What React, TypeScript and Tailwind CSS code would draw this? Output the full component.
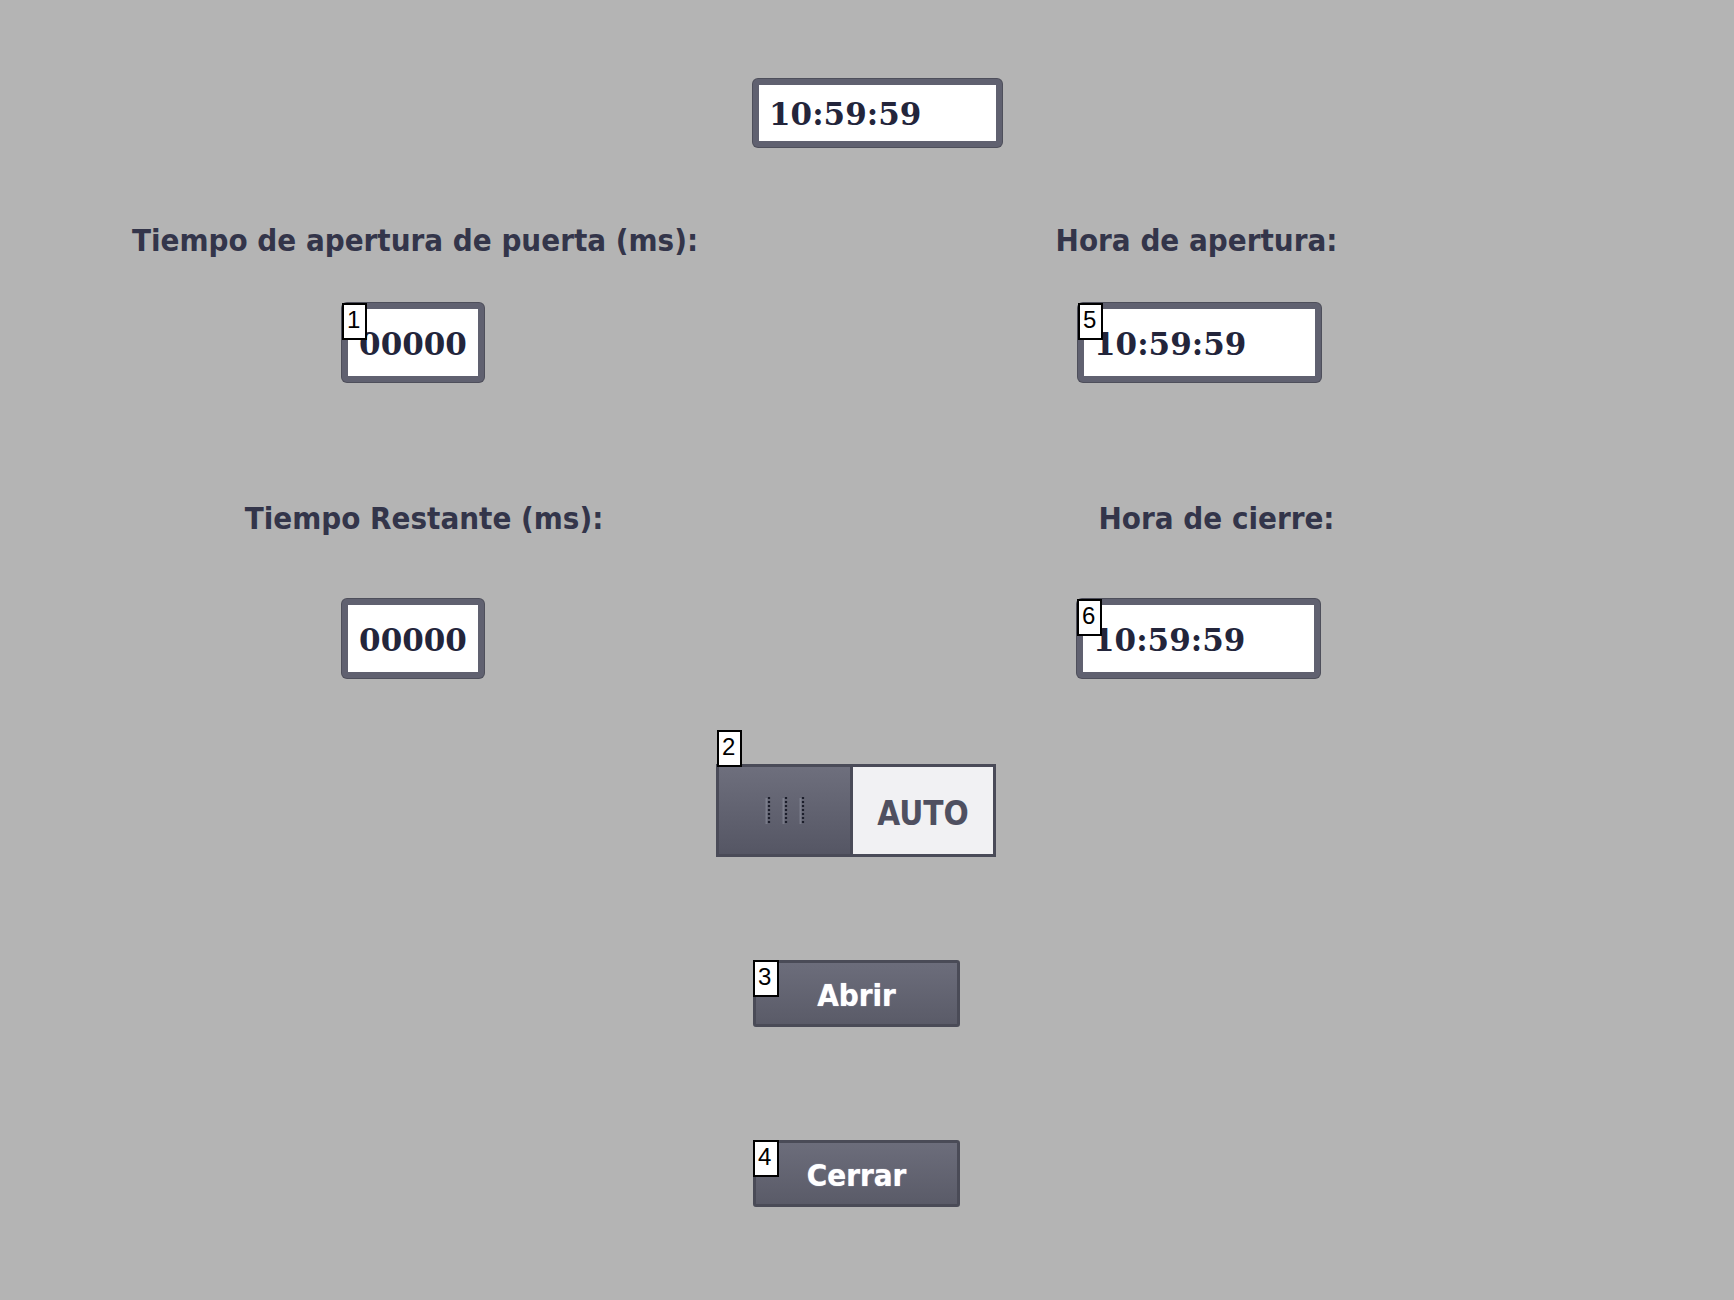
import React from "react";

const labelFont = { fontFamily: '"DejaVu Sans Condensed", "DejaVu Sans", sans-serif' };
const valueFont = { fontFamily: '"DejaVu Serif", "Liberation Serif", serif' };
const badgeFont = { fontFamily: '"Liberation Sans", Arial, sans-serif' };

function Badge({ n, className = "" }: { n: string; className?: string }) {
  return (
    <div
      className={`absolute w-[25px] h-[37px] bg-white border-2 border-black text-black text-[24px] leading-[30px] pl-[3px] ${className}`}
      style={badgeFont}
    >
      {n}
    </div>
  );
}

function ValueBox({
  w,
  value,
  badge,
  align = "center",
  h = 79,
}: {
  w: string;
  value: string;
  badge?: string;
  align?: "center" | "left";
  h?: number;
}) {
  return (
    <div className={`relative ${w} shrink-0`}>
      <div
        className={`${h === 79 ? "h-[79px]" : "h-[68px]"} w-full rounded-[5px] border-[6px] border-[#606170] bg-white shadow-[0_0_0_1px_#4e4f5b] flex items-center pt-[3px] ${
          align === "center" ? "justify-center" : "justify-start pl-[10px]"
        }`}
      >
        <span className="text-[31px] font-bold text-[#23253b] leading-none" style={valueFont}>
          {value}
        </span>
      </div>
      {badge && <Badge n={badge} className="left-0 top-0" />}
    </div>
  );
}

function Grip() {
  return (
    <svg width="40" height="32" viewBox="0 0 40 32">
      {[4, 21, 38].map((x) => (
        <g key={x}>
          <line x1={x - 2.5} y1="3" x2={x - 2.5} y2="29" stroke="#9a9ba8" strokeOpacity="0.45" strokeWidth="2" />
          <line x1={x} y1="2" x2={x} y2="30" stroke="#1c1e2b" strokeWidth="2.2" strokeDasharray="2 2" />
        </g>
      ))}
    </svg>
  );
}

function Button({ label, badge }: { label: string; badge: string }) {
  return (
    <div className="relative ml-[753px] w-[207px]">
      <div className="h-[67px] w-full rounded-[3px] border-[3px] border-[#4a4b57] bg-gradient-to-b from-[#6c6d7b] to-[#5a5b68] flex items-center justify-center pt-[4px]">
        <span
          className="text-white font-bold text-[31px] leading-none [text-shadow:0_0_1px_#d8dcf0]"
          style={labelFont}
        >
          {label}
        </span>
      </div>
      <Badge n={badge} className="left-0 top-0 w-[26px]" />
    </div>
  );
}

export default function App() {
  return (
    <div className="min-h-[1300px] w-[1734px] bg-[#b4b4b4] pt-[79px] overflow-hidden">
      {/* Clock */}
      <div className="ml-[753px]">
        <ValueBox w="w-[249px]" value="10:59:59" align="left" h={68} />
      </div>

      {/* Labels row 1 */}
      <div
        className="mt-[78px] flex h-[31px] items-center text-[31px] font-bold leading-[31px] text-[#33354a]"
        style={labelFont}
      >
        <div className="w-[830px] shrink-0 text-center whitespace-nowrap">Tiempo de apertura de puerta (ms):</div>
        <div className="w-[733px] shrink-0 text-center whitespace-nowrap">Hora de apertura:</div>
      </div>

      {/* Boxes row 1 */}
      <div className="mt-[47px] flex">
        <div className="ml-[342px]">
          <ValueBox w="w-[142px]" value="00000" badge="1" />
        </div>
        <div className="ml-[594px]">
          <ValueBox w="w-[243px]" value="10:59:59" badge="5" align="left" />
        </div>
      </div>

      {/* Labels row 2 */}
      <div
        className="mt-[121px] flex h-[31px] items-center text-[31px] font-bold leading-[31px] text-[#33354a]"
        style={labelFont}
      >
        <div className="w-[848px] shrink-0 text-center whitespace-nowrap">Tiempo Restante (ms):</div>
        <div className="w-[737px] shrink-0 text-center whitespace-nowrap">Hora de cierre:</div>
      </div>

      {/* Boxes row 2 */}
      <div className="mt-[65px] flex">
        <div className="ml-[342px]">
          <ValueBox w="w-[142px]" value="00000" />
        </div>
        <div className="ml-[593px]">
          <ValueBox w="w-[243px]" value="10:59:59" badge="6" align="left" />
        </div>
      </div>

      {/* Toggle */}
      <div className="relative mt-[86px] ml-[716px] w-[280px]">
        <div className="flex h-[93px] w-full border-[3px] border-[#4a4b58] bg-[#4a4b58]">
          <div className="flex w-[131px] items-center justify-center bg-gradient-to-b from-[#6e6f7d] to-[#555664]">
            <Grip />
          </div>
          <div className="ml-[3px] flex flex-1 items-center justify-center bg-[#f1f1f3] pt-[5px]">
            <span className="text-[33px] font-bold leading-none text-[#4f5060]" style={labelFont}>
              AUTO
            </span>
          </div>
        </div>
        <Badge n="2" className="left-[1px] top-[-34px]" />
      </div>

      {/* Buttons */}
      <div className="mt-[103px]">
        <Button label="Abrir" badge="3" />
      </div>
      <div className="mt-[113px]">
        <Button label="Cerrar" badge="4" />
      </div>
    </div>
  );
}
